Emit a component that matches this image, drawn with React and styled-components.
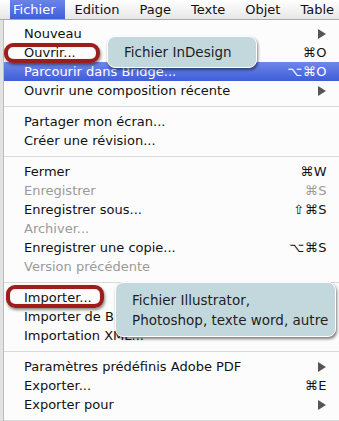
import React from "react";
import styled, { createGlobalStyle } from "styled-components";

const GlobalStyle = createGlobalStyle`
  html, body {
    margin: 0;
    padding: 0;
    background: #ffffff;
  }
  body {
    width: 339px;
    height: 421px;
    overflow: hidden;
    font-family: "DejaVu Sans", "Liberation Sans", sans-serif;
  }
`;

const Screen = styled.div`
  position: relative;
  width: 339px;
  height: 421px;
  overflow: hidden;
  background: #e2e2e2;
`;

const MenuBar = styled.div`
  display: flex;
  align-items: stretch;
  height: 20px;
  box-sizing: border-box;
  padding-left: 10px;
  background: linear-gradient(#ffffff, #f1f1f1 60%, #e6e6e6);
  border-bottom: 1px solid #a9a9a9;
  white-space: nowrap;
`;

const BarItem = styled.div`
  display: flex;
  align-items: center;
  padding: ${(p) => (p.$active ? "0 9px 0 3px" : "0 10px")};
  font-size: 13px;
  color: ${(p) => (p.$active ? "#ffffff" : "#111111")};
  background: ${(p) =>
    p.$active ? "linear-gradient(#6a84e8, #3f5fdb)" : "transparent"};
`;

const Menu = styled.div`
  margin-left: 3px;
  padding-top: 4px;
  background: #fcfcfc;
  border-left: 1px solid #bdbdbd;
  height: 401px;
  box-sizing: border-box;
`;

const Row = styled.div`
  display: flex;
  align-items: center;
  height: 19px;
  padding: 0 12px 0 20px;
  font-size: 13px;
  white-space: nowrap;
  color: ${(p) => (p.$active ? "#ffffff" : p.$disabled ? "#9a9a9a" : "#111111")};
  background: ${(p) =>
    p.$active ? "linear-gradient(#6e87e9, #3e5ed9)" : "transparent"};
`;

const Label = styled.span`
  flex: 1;
  overflow: hidden;
`;

const Shortcut = styled.span`
  letter-spacing: 0.5px;
`;

const Arrow = styled.span`
  width: 0;
  height: 0;
  margin-right: 1px;
  border-top: 5px solid transparent;
  border-bottom: 5px solid transparent;
  border-left: 8px solid #555555;
`;

const Separator = styled.div`
  height: 12px;
  display: flex;
  align-items: center;
  &::after {
    content: "";
    flex: 1;
    height: 1px;
    background: #d9d9d9;
  }
`;

const Ring = styled.div`
  position: absolute;
  left: ${(p) => p.$x}px;
  top: ${(p) => p.$y}px;
  width: ${(p) => p.$w}px;
  height: ${(p) => p.$h}px;
  box-sizing: border-box;
  border: 4px solid #9d1c1c;
  border-radius: 9px;
  box-shadow: 1px 2px 3px rgba(0, 0, 0, 0.45),
    inset 0 0 1px rgba(0, 0, 0, 0.4);
`;

const Callout = styled.div`
  position: absolute;
  left: ${(p) => p.$x}px;
  top: ${(p) => p.$y}px;
  width: ${(p) => p.$w}px;
  height: ${(p) => p.$h}px;
  box-sizing: border-box;
  padding: 0 0 0 16px;
  display: flex;
  flex-direction: column;
  justify-content: center;
  background: #c3d8dd;
  border: 1.5px solid #ffffff;
  border-radius: 8px;
  box-shadow: 1px 2px 3px rgba(0, 0, 0, 0.5);
  font-size: 13.5px;
  line-height: 20px;
  color: #1e1e1e;
  white-space: nowrap;
`;

const items = [
  { label: "Nouveau", arrow: true },
  { label: "Ouvrir...", key: "⌘O" },
  { label: "Parcourir dans Bridge...", key: "⌥⌘O", active: true },
  { label: "Ouvrir une composition récente", arrow: true },
  { sep: true },
  { label: "Partager mon écran..." },
  { label: "Créer une révision..." },
  { sep: true },
  { label: "Fermer", key: "⌘W" },
  { label: "Enregistrer", key: "⌘S", disabled: true },
  { label: "Enregistrer sous...", key: "⇧⌘S" },
  { label: "Archiver...", disabled: true },
  { label: "Enregistrer une copie...", key: "⌥⌘S" },
  { label: "Version précédente", disabled: true },
  { sep: true },
  { label: "Importer..." },
  { label: "Importer de Bridge..." },
  { label: "Importation XML..." },
  { sep: true },
  { label: "Paramètres prédéfinis Adobe PDF", arrow: true },
  { label: "Exporter...", key: "⌘E" },
  { label: "Exporter pour", arrow: true },
  { sep: true },
];

const menus = ["Fichier", "Edition", "Page", "Texte", "Objet", "Table"];

export default function App() {
  return (
    <>
      <GlobalStyle />
      <Screen>
        <MenuBar>
          {menus.map((m, i) => (
            <BarItem key={m} $active={i === 0}>
              {m}
            </BarItem>
          ))}
        </MenuBar>
        <Menu>
          {items.map((it, i) =>
            it.sep ? (
              <Separator key={i} />
            ) : (
              <Row key={i} $active={it.active} $disabled={it.disabled}>
                <Label>{it.label}</Label>
                {it.key && <Shortcut>{it.key}</Shortcut>}
                {it.arrow && <Arrow />}
              </Row>
            )
          )}
        </Menu>
        <Ring $x={4} $y={43} $w={96} $h={20} />
        <Ring $x={6} $y={285} $w={98} $h={23} />
        <Callout $x={107} $y={36} $w={150} $h={32}>
          Fichier InDesign
        </Callout>
        <Callout $x={115} $y={282} $w={221} $h={55}>
          <span>Fichier Illustrator,</span>
          <span>Photoshop, texte word, autre</span>
        </Callout>
      </Screen>
    </>
  );
}
